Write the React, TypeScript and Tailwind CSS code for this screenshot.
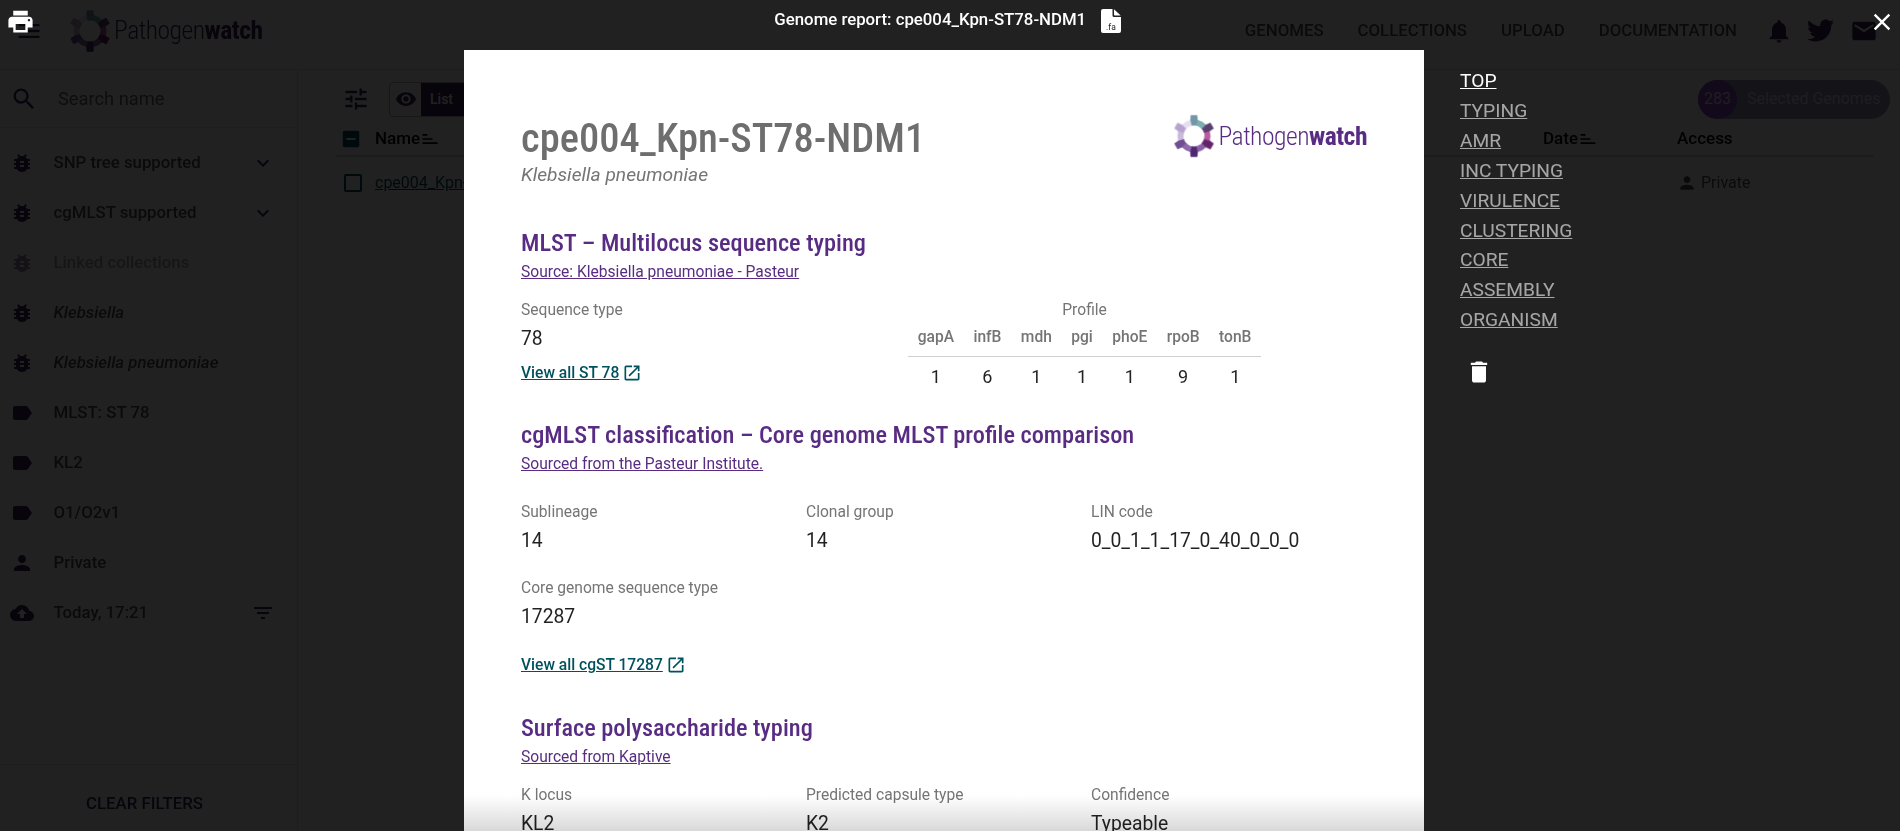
import React from 'react';
import {
  MdBugReport, MdClose, MdCloudUpload, MdDelete, MdEmail, MdExpandMore, MdFilterList,
  MdIndeterminateCheckBox, MdLabel, MdMenu, MdNotifications, MdOpenInNew, MdPerson, MdPrint, MdSearch,
  MdSort, MdTune, MdVisibility,
} from 'react-icons/md';
import { FaTwitter } from 'react-icons/fa';

const brandFont = "font-['Roboto',sans-serif] [font-stretch:75%]";

const gearColours = ['#7fadb2', '#b45d9f', '#8a5fa5', '#8f6bab', '#c9bada', '#e6dff0'];

const GearLogo = ({ className }: { className?: string }) => (
  <svg viewBox="0 0 48 48" className={className}>
    {gearColours.map((c, i) => (
      <path
        key={i}
        transform={`rotate(${i * 60} 24 24)`}
        fill={c}
        className="mix-blend-multiply"
        d="M21.41 12.79 L19.95 6.46 L20.4 1.28 L27.6 1.28 L28.05 6.46 A18 18 0 0 1 37.16 11.72 L41.87 9.53 L45.47 15.76 L41.21 18.74 L35 20.64 A11.5 11.5 0 0 0 21.41 12.79 Z"
      />
    ))}
  </svg>
);

const Wordmark = ({ className }: { className?: string }) => (
  <span className={`${brandFont} font-light tracking-[-0.5px] ${className ?? ''}`}>
    Pathogen<span className="font-bold">watch</span>
  </span>
);

const filters = [
  { icon: MdBugReport, label: 'SNP tree supported', more: true },
  { icon: MdBugReport, label: 'cgMLST supported', more: true },
  { icon: MdBugReport, label: 'Linked collections', faded: true },
  { icon: MdBugReport, label: 'Klebsiella', italic: true },
  { icon: MdBugReport, label: 'Klebsiella pneumoniae', italic: true },
  { icon: MdLabel, label: 'MLST: ST 78' },
  { icon: MdLabel, label: 'KL2' },
  { icon: MdLabel, label: 'O1/O2v1' },
  { icon: MdPerson, label: 'Private' },
  { icon: MdCloudUpload, label: 'Today, 17:21', sort: true },
];

const BackgroundApp = () => (
  <div className="h-full flex flex-col bg-white text-black font-['Roboto',sans-serif]">
    <header className="h-[70px] shrink-0 flex items-center pb-[8px] border-b border-[#e0e0e0]">
      <MdMenu className="ml-[15px] text-[28px] text-[#3c1f5e]" />
      <GearLogo className="ml-[25px] w-[44px] h-[44px]" />
      <Wordmark className="ml-[2px] text-[25.6px] text-[#3c1f5e]" />
      <nav className="ml-auto flex items-center gap-[34px] text-[16.8px] font-medium text-black/70">
        <span>GENOMES</span>
        <span>COLLECTIONS</span>
        <span>UPLOAD</span>
        <span>DOCUMENTATION</span>
      </nav>
      <div className="ml-[28px] mr-[22px] flex items-center gap-[14px] text-[#3c1f5e]">
        <MdNotifications className="text-[28px]" />
        <FaTwitter className="text-[27px]" />
        <MdEmail className="ml-[2px] text-[28px]" />
      </div>
    </header>
    <div className="flex-1 flex min-h-0">
      <aside className="w-[298px] shrink-0 border-r border-[#e0e0e0] flex flex-col">
        <div className="h-[58px] shrink-0 border-b border-[#e0e0e0] flex items-center pl-[10px]">
          <MdSearch className="text-[28px] text-[#3c1f5e]" />
          <span className="ml-[20px] text-[18.3px] text-black/60">Search name</span>
        </div>
        <ul className="flex-1 pt-[10px]">
          {filters.map((f) => (
            <li key={f.label} className={`h-[50px] flex items-center pl-[10px] pr-[22px] ${f.faded ? 'opacity-50' : ''}`}>
              <f.icon className="text-[24px] w-[24px] text-[#3c1f5e]" />
              <span className={`ml-[19.5px] text-[16.8px] font-medium text-black/70 ${f.italic ? 'italic' : ''}`}>{f.label}</span>
              {f.more && <MdExpandMore className="ml-auto text-[24px] text-[#3c1f5e]" />}
              {f.sort && <MdFilterList className="ml-auto text-[24px] text-[#3c1f5e]" />}
            </li>
          ))}
        </ul>
        <div className="h-[67px] shrink-0 border-t border-[#e0e0e0] flex items-center justify-center pt-[12px] pr-[8px] text-[16.8px] font-medium text-[#3c1f5e]">
          CLEAR FILTERS
        </div>
      </aside>
      <main className="flex-1 pl-[38px] pr-[10px]">
        <div className="h-[58px] flex items-center">
          <MdTune className="ml-[6px] text-[28px] text-[#3c1f5e]" />
          <div className="ml-[19px] h-[35px] flex items-center border border-black/30 rounded-[4px] overflow-hidden">
            <span className="w-[31px] flex justify-center text-[#3c1f5e]"><MdVisibility className="text-[22px]" /></span>
            <span className="h-full w-[60px] bg-[#3c1f5e] text-white text-[14px] font-medium flex items-center pl-[9px]">List</span>
          </div>
          <div className="ml-auto h-[39px] w-[192px] rounded-full bg-[#9a92b9] flex items-center text-[16px] text-[#e6dff6]">
            <span className="w-[39px] h-[39px] rounded-full bg-[#8a45c8] flex items-center justify-center">283</span>
            <span className="ml-[10px]">Selected Genomes</span>
          </div>
        </div>
        <div className="h-[29px] mr-[17px] flex items-center pb-[5px] border-b-2 border-[#ccc] text-[17px] font-medium">
          <MdIndeterminateCheckBox className="ml-[4px] text-[22px] text-[#00515e]" />
          <span className="ml-[13px] w-[1168px] flex items-center">Name<MdSort className="-scale-y-100 text-[20px]" /></span>
          <span className="w-[134px] flex items-center">Date<MdSort className="-scale-y-100 text-[20px]" /></span>
          <span>Access</span>
        </div>
        <div className="h-[51px] flex items-center text-[16px]">
          <span className="ml-[8px] w-[18px] h-[18px] border-2 border-[#00515e] rounded-[2px]" />
          <span className="ml-[13px] w-[1302px] underline text-[#00515e]">cpe004_Kpn-ST78-NDM1</span>
          <span className="flex items-center text-black/70"><MdPerson className="text-[20px] mr-[4px]" />Private</span>
        </div>
      </main>
    </div>
  </div>
);

const FileIcon = () => (
  <svg viewBox="0 0 20 24" className="w-[20px] h-[24px]">
    <path fill="#fff" d="M2 0 H11.5 V6.5 a1.5 1.5 0 0 0 1.5 1.5 H20 V22 a2 2 0 0 1 -2 2 H2 a2 2 0 0 1 -2 -2 V2 a2 2 0 0 1 2 -2 Z" />
    <path fill="#fff" d="M13 0.3 L19.7 6.6 H14 a1 1 0 0 1 -1 -1 Z" />
    <text x="10" y="20.5" textAnchor="middle" fontSize="8.5" fontFamily="Roboto, sans-serif" fill="#212121">.fa</text>
  </svg>
);

const Heading = ({ title, source, className }: { title: string; source: string; className?: string }) => (
  <div className={className}>
    <h2 className={`${brandFont} text-[24.3px] leading-[32px] font-medium text-[#582c83]`}>{title}</h2>
    <a className="block mt-[2px] text-[15.6px] leading-[22px] text-[#582c83] underline">{source}</a>
  </div>
);

const Field = ({ label, value }: { label: string; value: string }) => (
  <div>
    <div className="text-[15.6px] leading-[24px] text-[#757575]">{label}</div>
    <div className="mt-[2px] text-[19.3px] leading-[30px] text-black/87">{value}</div>
  </div>
);

const ViewAll = ({ label, className }: { label: string; className?: string }) => (
  <a className={`flex items-center text-[15.6px] leading-[24px] font-medium text-[#00515e] ${className ?? ''}`}>
    <span className="underline">{label}</span>
    <MdOpenInNew className="ml-[3px] text-[20px]" />
  </a>
);

const profile = [
  ['gapA', '1'], ['infB', '6'], ['mdh', '1'], ['pgi', '1'], ['phoE', '1'], ['rpoB', '9'], ['tonB', '1'],
];

const Report = () => (
  <article className="w-[960px] h-full shrink-0 bg-white relative overflow-hidden font-['Roboto',sans-serif] px-[57px] pt-[62px]">
    <div className="flex justify-between items-start">
      <div>
        <h1 className={`${brandFont} text-[40.5px] leading-[52px] font-medium text-[#6e6e6e]`}>cpe004_Kpn-ST78-NDM1</h1>
        <p className="mt-[-2px] text-[19.2px] leading-[26px] italic text-[#757575]">Klebsiella pneumoniae</p>
      </div>
      <div className="flex items-center mt-[2px]">
        <GearLogo className="w-[44px] h-[44px]" />
        <Wordmark className="ml-[2px] text-[25.6px] text-[#582c83]" />
      </div>
    </div>

    <Heading className="mt-[38.5px]" title="MLST – Multilocus sequence typing" source="Source: Klebsiella pneumoniae - Pasteur" />
    <div className="mt-[15px] flex">
      <div className="w-[387px]">
        <Field label="Sequence type" value="78" />
        <ViewAll className="mt-[7px]" label="View all ST 78" />
      </div>
      <div className="text-center">
        <div className="text-[15.6px] leading-[24px] text-[#757575]">Profile</div>
        <table className="border-collapse">
          <thead>
            <tr className="border-b border-[#d0d0d0]">
              {profile.map(([gene]) => (
                <th key={gene} className="px-[9.7px] pb-[2px] h-[35px] text-[15.6px] font-medium text-[#757575]">{gene}</th>
              ))}
            </tr>
          </thead>
          <tbody>
            <tr>
              {profile.map(([gene, n]) => (
                <td key={gene} className="px-[9.7px] h-[39px] text-[18px] text-black/87">{n}</td>
              ))}
            </tr>
          </tbody>
        </table>
      </div>
    </div>

    <Heading className="mt-[23.5px]" title="cgMLST classification – Core genome MLST profile comparison" source="Sourced from the Pasteur Institute." />
    <div className="mt-[24.5px] grid grid-cols-[285px_285px_1fr] gap-y-[20.5px]">
      <Field label="Sublineage" value="14" />
      <Field label="Clonal group" value="14" />
      <Field label="LIN code" value="0_0_1_1_17_0_40_0_0_0" />
      <Field label="Core genome sequence type" value="17287" />
    </div>
    <ViewAll className="mt-[20.5px]" label="View all cgST 17287" />

    <Heading className="mt-[35px]" title="Surface polysaccharide typing" source="Sourced from Kaptive" />
    <div className="mt-[15px] grid grid-cols-[285px_285px_1fr]">
      <Field label="K locus" value="KL2" />
      <Field label="Predicted capsule type" value="K2" />
      <Field label="Confidence" value="Typeable" />
    </div>

    <div className="absolute left-0 right-0 bottom-0 h-[36px] bg-gradient-to-b from-black/0 to-black/15" />
  </article>
);

const sections = ['TOP', 'TYPING', 'AMR', 'INC TYPING', 'VIRULENCE', 'CLUSTERING', 'CORE', 'ASSEMBLY', 'ORGANISM'];

export default function App() {
  return (
    <div className="relative h-screen overflow-hidden">
      <BackgroundApp />
      {/* report dialog */}
      <div className="absolute inset-0 bg-black/87 flex flex-col text-white font-['Roboto',sans-serif]">
        <div className="h-[50px] shrink-0 relative flex items-center justify-center pb-[10px] pr-[5px]">
          <MdPrint className="absolute left-[6px] top-[7px] text-[29px]" />
          <span className="text-[16.8px] font-medium">Genome report: cpe004_Kpn-ST78-NDM1</span>
          <span className="ml-[14.5px] mt-[2px]"><FileIcon /></span>
          <MdClose className="absolute right-[4px] top-[8px] text-[28px]" />
        </div>
        <div className="flex-1 min-h-0 flex pl-[464px]">
          <Report />
          <nav className="ml-[36px] pt-[16px] flex flex-col items-start">
            {sections.map((s, i) => (
              <a key={s} className={`text-[19.2px] leading-[29.9px] underline ${i === 0 ? 'text-white' : 'text-white/60'}`}>{s}</a>
            ))}
            <MdDelete className="mt-[23px] ml-[5px] text-[28px]" />
          </nav>
        </div>
      </div>
    </div>
  );
}
